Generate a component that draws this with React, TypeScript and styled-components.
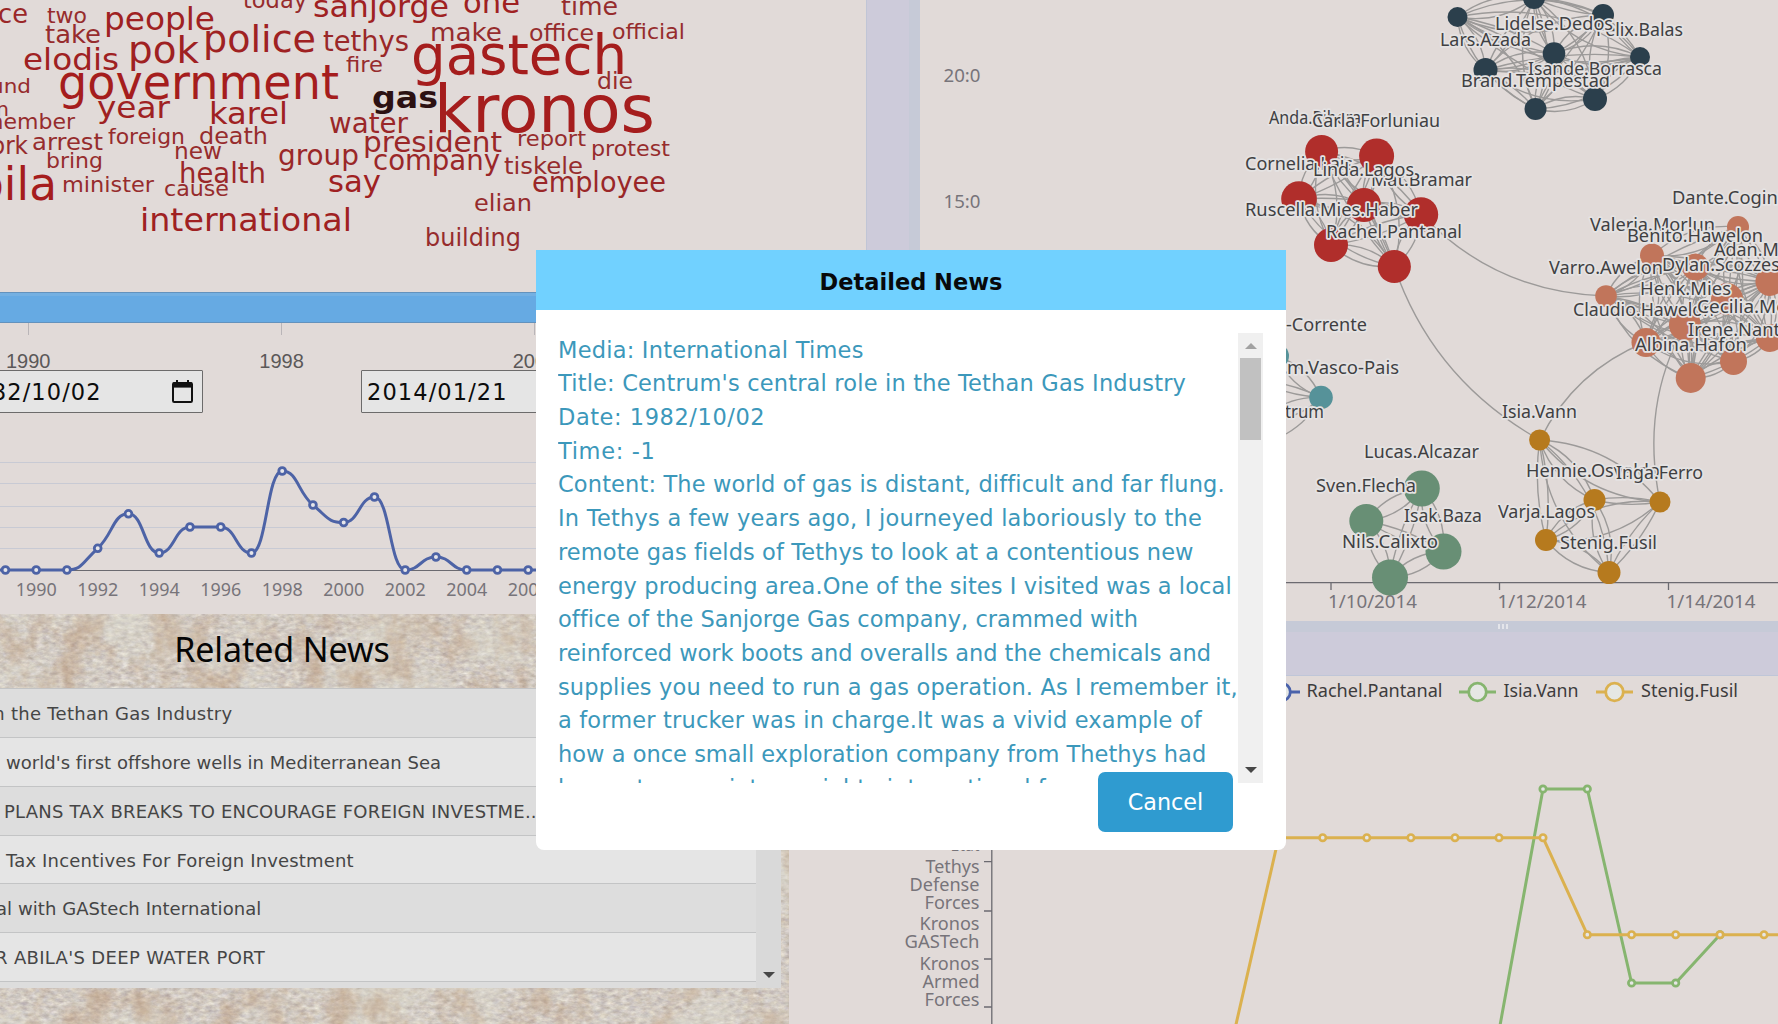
import React from 'react';
import styled, { createGlobalStyle } from 'styled-components';

const UI = "'DejaVu Sans', Verdana, sans-serif";
const CHART = "'Noto Sans', 'Open Sans', sans-serif";

const GlobalStyle = createGlobalStyle`
  *, *::before, *::after { box-sizing: border-box; }
  body { margin: 0; overflow: hidden; font-family: ${UI}; background: #e1dad8; }
`;

const Page = styled.main`
  position: relative;
  display: grid;
  grid-template-columns: 789px 77px 54px 858px;
  grid-template-rows: 614px 62px 348px;
  width: 1778px;
  height: 1024px;
  overflow: hidden;
  background: #e1dad8;
`;

const OverviewPanel = styled.section`
  grid-column: 1 / 3;
  grid-row: 1;
  display: flex;
  flex-direction: column;
  background: #e1dad8;
`;

const Drawing = styled.svg`
  display: block;
  flex: none;
  overflow: hidden;
`;

const SliderTrack = styled.div`
  height: 31px;
  background: #66aae3;
  border-top: 1px solid #6392bd;
  border-bottom: 1px solid #6392bd;
  box-shadow: inset 0 3px 0 #74b0e2;
`;

const SliderScale = styled.div`
  display: flex;
  height: 47px;
  margin-left: -98.5px;
`;

const ScaleMark = styled.div`
  width: 253.4px;
  flex: none;
  display: flex;
  flex-direction: column;
  align-items: center;
  font: 20px/20px 'Liberation Sans', Arial, sans-serif;
  color: #5b5858;
  &::before {
    content: '';
    flex: none;
    width: 1px;
    height: 12px;
    margin-bottom: 16px;
    background: #b9b5b8;
  }
`;

const DateRow = styled.div`
  display: flex;
  gap: 158px;
  height: 43px;
  margin-left: -45px;
`;

const DateField = styled.div`
  display: flex;
  align-items: center;
  justify-content: space-between;
  flex: none;
  width: 248px;
  height: 43px;
  padding: 0 9px 0 5px;
  border: 1px solid #6c6b6b;
  border-radius: 1px;
  background: #e5e5e5;
  color: #0c0c0c;
  font-size: 22.5px;
  letter-spacing: 1.1px;
`;

const NewsPanel = styled.section`
  grid-column: 1;
  grid-row: 2 / 4;
  display: grid;
  grid-template: 410px / 789px;
  overflow: hidden;
`;

const Paper = styled.svg`
  grid-area: 1 / 1;
`;

const NewsBody = styled.div`
  grid-area: 1 / 1;
  z-index: 1;
  display: flex;
  flex-direction: column;
`;

const NewsTitle = styled.h2`
  width: 564px;
  height: 74px;
  margin: 0;
  padding-top: 11px;
  text-align: center;
  font: 400 34px/48px ${CHART};
  letter-spacing: -0.1px;
  color: #060606;
`;

const NewsScroller = styled.div`
  display: flex;
  width: 781px;
  height: 300px;
  overflow: hidden;
`;

const NewsList = styled.ul`
  flex: 1;
  margin: 0;
  padding: 0;
  list-style: none;
`;

const NewsItem = styled.li<{ $indent: number; $spacing: number }>`
  height: 48.85px;
  padding-left: 10px;
  border-top: 1px solid #c3c4c5;
  text-indent: ${(p) => p.$indent - 10}px;
  white-space: nowrap;
  font-size: 18px;
  line-height: 49px;
  letter-spacing: ${(p) => p.$spacing}px;
  color: #454545;
  background: #e5e5e5;
  &:nth-child(odd) { background: #dddddd; }
`;

const ScrollRail = styled.div<{ $tone: string }>`
  display: flex;
  flex-direction: column;
  align-items: center;
  justify-content: space-between;
  flex: none;
  width: 25px;
  padding: 10px 0;
  background: ${(p) => p.$tone};
`;

const Arrow = styled.span<{ $up?: boolean }>`
  width: 0;
  height: 0;
  border-left: 6px solid transparent;
  border-right: 6px solid transparent;
  ${(p) => (p.$up ? 'border-bottom: 6px solid #a2a2a2;' : 'border-top: 6px solid #474747;')}
`;

const Thumb = styled.span`
  width: 21px;
  height: 82px;
  margin: 9px 0 auto;
  background: #c1c1c1;
`;

const VerticalZoomBar = styled.div`
  grid-column: 3;
  grid-row: 1 / 3;
  background: #cdcbda;
  border-left: 1px solid #c0c5d6;
  border-right: 11px solid #c6cad7;
`;

const NetworkPanel = styled.section`
  grid-column: 4;
  grid-row: 1 / 3;
  display: flex;
  flex-direction: column;
`;

const HorizontalZoomBar = styled.div`
  display: flex;
  justify-content: center;
  gap: 2px;
  height: 55px;
  padding: 3px 96px 0 404px;
  background: #cdcbda;
  border-top: 11px solid #c6cad7;
  border-bottom: 1px solid #bfc6d8;
`;

const Grip = styled.i`
  width: 2px;
  height: 5px;
  margin-top: -11px;
  background: #e4e5ea;
`;

const SeriesPanel = styled.section`
  grid-column: 2 / 5;
  grid-row: 3;
`;

const Dialog = styled.div`
  position: absolute;
  left: 536px;
  top: 250px;
  z-index: 10;
  display: flex;
  flex-direction: column;
  width: 750px;
  height: 600px;
  border-radius: 0 0 8px 8px;
  background: #fff;
`;

const DialogHeader = styled.header`
  height: 60px;
  text-align: center;
  font-size: 22.5px;
  font-weight: 700;
  line-height: 64px;
  color: #08090b;
  background: #71d1ff;
`;

const DialogContent = styled.div`
  display: flex;
  width: 705px;
  height: 450px;
  margin: 23px 0 0 22px;
  overflow: hidden;
`;

const Article = styled.div`
  flex: 1;
  min-width: 0;
  padding-top: 0.5px;
  font-size: 22.5px;
  line-height: 33.72px;
  color: #3c98bb;
  white-space: nowrap;
`;

const Line = styled.div<{ $spacing: number }>`
  letter-spacing: ${(p) => p.$spacing}px;
`;

const CancelButton = styled.button`
  align-self: flex-end;
  width: 135px;
  height: 60px;
  margin: -11px 53px 0 0;
  padding: 0;
  border: 0;
  border-radius: 7px;
  font: 22.3px/61px ${UI};
  color: #fff;
  background: #2f9bd0;
`;

type Word = [text: string, x0: number, x1: number, baseline: number, size: number];

const WORDS: Word[] = [
  ['today', 243, 307, 8, 23], ['sanjorge', 313, 449, 16.5, 31], ['one', 463, 520, 12.5, 31],
  ['time', 561, 618, 14.5, 25], ['ce', -2, 28, 22.5, 27], ['two', 47, 87, 22.5, 22],
  ['take', 45, 101, 42.5, 25.5], ['people', 104, 215, 29.5, 32], ['police', 203, 316, 51.5, 38],
  ['pok', 128, 199, 62.5, 38], ['tethys', 323, 409, 51, 28], ['elodis', 23, 119, 70, 31],
  ['fire', 346, 383, 71.5, 21], ['government', 58, 339, 98.5, 48], ['und', -10, 31, 92.5, 20],
  ['n', -4, 9, 116, 20], ['year', 97, 170, 118, 31], ['karel', 209, 288, 123.5, 31],
  ['water', 329, 408, 132.5, 28], ['member', -18, 75, 129, 21], ['ork', -9, 28, 153.5, 25],
  ['arrest', 32, 103, 149.5, 23], ['foreign', 108, 185, 143.5, 21], ['death', 199, 268, 143.5, 23],
  ['new', 174, 222, 158.5, 23], ['president', 363, 502, 151.5, 28.5], ['report', 517, 586, 145.5, 21],
  ['protest', 591, 670, 155.5, 21], ['bring', 46, 103, 168, 21], ['health', 179, 266, 182.5, 28],
  ['group', 278, 359, 164.5, 28], ['company', 373, 500, 169.5, 28], ['tiskele', 504, 583, 173.5, 23],
  ['say', 328, 381, 191.5, 31], ['employee', 532, 666, 191.5, 28], ['minister', 62, 154, 191.5, 20.5],
  ['cause', 164, 229, 195.5, 21], ['bila', -25, 57, 200, 46], ['international', 140, 352, 230.5, 32],
  ['elian', 474, 532, 210.5, 23], ['building', 425, 521, 245.5, 24.5], ['make', 430, 502, 40.5, 25],
  ['office', 529, 594, 40.5, 23.5], ['official', 612, 685, 39, 21.5], ['gastech', 411, 627, 74, 55],
  ['kronos', 434, 655, 132, 66], ['die', 597, 633, 88.5, 22.5],
];

const wordColor = (size: number) => (size > 42 ? '#a51d1d' : size > 30 ? '#9f2122' : size > 26 ? '#9a2728' : '#962c2d');

const WordCloud = () => (
  <Drawing width={866} height={292} fontFamily={UI}>
    {WORDS.map(([text, x0, x1, y, size]) => (
      <text key={text} x={x0} y={y} fontSize={size} fill={wordColor(size)} textLength={x1 - x0} lengthAdjust="spacingAndGlyphs">
        {text}
      </text>
    ))}
    <text x={372} y={107.5} fontSize={31} fontWeight={700} fill="#2c1112" textLength={66} lengthAdjust="spacingAndGlyphs">
      gas
    </text>
  </Drawing>
);

const CalendarIcon = () => (
  <svg width={21} height={23} viewBox="0 0 21 23">
    <path d="M5 0v4M16 0v4" stroke="#111" strokeWidth="2" />
    <rect x="1" y="3" width="19" height="19" rx="1.2" fill="none" stroke="#111" strokeWidth="2" />
    <rect x="1" y="2.4" width="19" height="5.2" fill="#111" />
  </svg>
);

const STEP = 30.75;
const COUNTS: [number, number][] = [
  [1988, 570], [1989, 570], [1990, 570], [1991, 570], [1992, 548.3], [1993, 513.8], [1994, 553], [1995, 527],
  [1996, 527], [1997, 553], [1998, 471], [1999, 505], [2000, 522.5], [2001, 497], [2002, 570], [2003, 557],
  [2004, 570], [2005, 570], [2006, 570], [2007, 570],
];
const yearX = (year: number) => 36.2 + (year - 1990) * STEP;

/* Cubic path whose tangents flatten out at every local extremum. */
const smoothPath = (points: [number, number][]) => {
  const slope = points.map((p, i) => {
    if (i === 0 || i === points.length - 1) return 0;
    const a = p[1] - points[i - 1][1];
    const b = points[i + 1][1] - p[1];
    return a * b <= 0 ? 0 : (a + b) / 2;
  });
  return points
    .map(([x, y], i) => {
      if (i === 0) return `M${x} ${y}`;
      const [px, py] = points[i - 1];
      const c = STEP * 0.5;
      return `C${px + c} ${py + slope[i - 1] * 0.5} ${x - c} ${y - slope[i] * 0.5} ${x} ${y}`;
    })
    .join('');
};

const YearChart = () => (
  <Drawing width={866} height={201} viewBox="0 413 866 201" fontFamily={CHART}>
    {[462.5, 483.5, 506.5, 527.5, 548.5].map((y) => (
      <line key={y} x1={0} x2={866} y1={y} y2={y} stroke="#c8cad4" />
    ))}
    <line x1={0} x2={866} y1={570.5} y2={570.5} stroke="#6b6a70" />
    <path d={smoothPath(COUNTS.map(([year, y]) => [yearX(year), y]))} fill="none" stroke="#4d63a6" strokeWidth={3} />
    {COUNTS.map(([year, y]) => (
      <circle key={year} cx={yearX(year)} cy={y} r={3.4} fill="#e6e6ea" stroke="#4d63a6" strokeWidth={2.8} />
    ))}
    {[1990, 1992, 1994, 1996, 1998, 2000, 2002, 2004, 2006].map((year) => (
      <text key={year} x={yearX(year) - 20.5} y={595.5} fontSize={18.4} fill="#77747a" textLength={41} lengthAdjust="spacingAndGlyphs">
        {year}
      </text>
    ))}
  </Drawing>
);

const NEWS = [
  { title: 'in the Tethan Gas Industry', indent: -12, spacing: 0.28 },
  { title: "world's first offshore wells in Mediterranean Sea", indent: 6, spacing: 0.03 },
  { title: 'PLANS TAX BREAKS TO ENCOURAGE FOREIGN INVESTME...', indent: 4, spacing: 0.22 },
  { title: 'Tax Incentives For Foreign Investment', indent: 6, spacing: 0.17 },
  { title: 'al with GAStech International', indent: -4, spacing: 0.07 },
  { title: "R ABILA'S DEEP WATER PORT", indent: -5, spacing: 0.33 },
  { title: '', indent: 0, spacing: 0 },
];

const PaperTexture = () => (
  <Paper width={789} height={410}>
    <defs>
      <filter id="weave" x="0" y="0" width="100%" height="100%" colorInterpolationFilters="sRGB">
        <feTurbulence type="fractalNoise" baseFrequency="0.14 0.26" numOctaves={3} seed={7} result="grain" />
        <feColorMatrix in="grain" type="matrix" values="0.26 0.12 0 0 0.63  0.26 0.16 0 0 0.58  0.22 0.18 0.08 0 0.52  0 0 0 0 1" />
      </filter>
      <filter id="stain" x="0" y="0" width="100%" height="100%" colorInterpolationFilters="sRGB">
        <feTurbulence type="fractalNoise" baseFrequency="0.034 0.024" numOctaves={5} seed={12} />
        <feColorMatrix type="matrix" values="0 0 0 0 0.7  0 0 0 0 0.53  0 0 0 0 0.38  2.6 0.6 0 0 -1.45" />
      </filter>
      <filter id="bleach" x="0" y="0" width="100%" height="100%" colorInterpolationFilters="sRGB">
        <feTurbulence type="fractalNoise" baseFrequency="0.012 0.02" numOctaves={4} seed={4} />
        <feColorMatrix type="matrix" values="0 0 0 0 0.88  0 0 0 0 0.88  0 0 0 0 0.83  0 3 0 0 -1.2" />
      </filter>
    </defs>
    <rect width="789" height="410" filter="url(#weave)" />
    <rect width="789" height="410" filter="url(#bleach)" opacity="0.42" />
    <rect width="789" height="410" filter="url(#stain)" opacity="0.4" />
  </Paper>
);

type GraphNode = [x: number, y: number, r: number];
type Label = [text: string, x: number, baseline: number, width: number];

const CLUSTERS: { color: string; nodes: GraphNode[] }[] = [
  { color: '#2b3f4c', nodes: [[1457.5, 17, 10], [1534, -2, 11], [1603, 15, 11], [1554, 53.5, 11.3], [1640, 57, 10], [1485.5, 70, 12], [1595, 99, 12], [1535.5, 109, 11]] },
  { color: '#b02e2b', nodes: [[1321.6, 151.5, 16.5], [1376.6, 156, 17.5], [1299, 199, 17.8], [1364, 205, 17], [1421, 214.5, 17.2], [1331, 245, 17], [1394.3, 266.5, 16.6]] },
  { color: '#c1755b', nodes: [[1738, 227, 11], [1652, 255.5, 12], [1695.5, 267, 13.5], [1606, 296, 10.8], [1727, 299, 16], [1770, 281.5, 14.5], [1685, 325, 16], [1646, 342.5, 14.5], [1770, 338, 14], [1733.5, 361.5, 13.5], [1690.7, 378, 15]] },
  { color: '#688f75', nodes: [[1421.8, 488.5, 18], [1366.3, 521, 17], [1443.5, 551.5, 18], [1390, 577.5, 18]] },
  { color: '#b67a1e', nodes: [[1539.6, 440, 10.5], [1594.5, 500, 11], [1660, 502, 10.5], [1546, 540, 11], [1609, 572.5, 11.5]] },
  { color: '#569299', nodes: [[1277, 356, 12], [1321, 397.5, 11.8], [1255, 380, 12], [1262, 420, 12]] },
];

const LABELS: Label[] = [
  ['Felix.Balas', 1596, 36, 87], ['Lars.Azada', 1440, 45.5, 91], ['Lidelse.Dedos', 1495, 30, 118],
  ['Brand.Tempestad', 1461, 87, 149], ['Isande.Borrasca', 1528, 75, 134],
  ['Anda.Ribera', 1269, 124, 92], ['Carla.Forluniau', 1312, 127, 128], ['Cornelia.Lais', 1245, 170, 108],
  ['Mat.Bramar', 1371, 186, 101], ['Linda.Lagos', 1313, 176, 101], ['Ruscella.Mies.Haber', 1245, 216, 173],
  ['Rachel.Pantanal', 1326, 238, 136],
  ['Dante.Coginian', 1672, 204, 132], ['Valeria.Morlun', 1590, 231, 125], ['Benito.Hawelon', 1627, 242, 136],
  ['Adan.Morlun', 1714, 256, 110], ['Varro.Awelon', 1549, 274, 114], ['Dylan.Scozzese', 1662, 270.5, 128],
  ['Henk.Mies', 1640, 295, 91], ['Claudio.Hawelon', 1573, 316, 141], ['Cecilia.Morluniau', 1697, 313, 154],
  ['Irene.Nant', 1688, 335.5, 92], ['Albina.Hafon', 1635, 351, 112],
  ['-Corrente', 1286, 331, 81], ['m.Vasco-Pais', 1287, 374, 112], ['trum', 1285, 418, 39],
  ['Lucas.Alcazar', 1364, 457.5, 115], ['Sven.Flecha', 1316, 492, 100], ['Isak.Baza', 1404, 522, 78],
  ['Nils.Calixto', 1342, 548, 96], ['Isia.Vann', 1502, 418, 75], ['Hennie.Osvaldo', 1526, 477, 134],
  ['Inga.Ferro', 1616, 479, 87], ['Varja.Lagos', 1498, 518, 97], ['Stenig.Fusil', 1560, 549, 97],
];

const arc = (a: GraphNode, b: GraphNode, bend: number) => {
  const cx = (a[0] + b[0]) / 2 - (a[1] - b[1]) * bend;
  const cy = (a[1] + b[1]) / 2 - (b[0] - a[0]) * bend;
  return `M${a[0]} ${a[1]}Q${cx} ${cy} ${b[0]} ${b[1]}`;
};

const DATES: [string, number][] = [['1/10/2014', 1328], ['1/12/2014', 1497.5], ['1/14/2014', 1666.5]];

const NetworkChart = () => (
  <Drawing width={858} height={621} viewBox="920 0 858 621" fontFamily={CHART} fontSize={18}>
    <g fill="#77747a">
      <text x={943.5} y={81.5} textLength={37} lengthAdjust="spacingAndGlyphs">20:0</text>
      <text x={943.5} y={207.5} textLength={37} lengthAdjust="spacingAndGlyphs">15:0</text>
      {DATES.map(([t, x]) => (
        <text key={t} x={x} y={607.5} textLength={89} lengthAdjust="spacingAndGlyphs">{t}</text>
      ))}
    </g>
    <path d="M920 582.7H1778M1331 583v7M1499.5 583v7M1668.5 583v7" stroke="#6b6a70" strokeWidth={1.3} fill="none" />
    <g fill="none" stroke="#9c9a99" strokeWidth={1.4}>
      {CLUSTERS.map((c) =>
        c.nodes.flatMap((a, i) =>
          c.nodes.map((b, j) =>
            i === j ? null : <path key={`${i}-${j}`} d={arc(a, b, (i + j) % 3 === 0 ? 0.1 : 0.22)} />,
          ),
        ),
      )}
      <path d="M1421 214Q1496 293 1606 296" />
      <path d="M1394 266Q1433 380 1540 440" />
      <path d="M1540 440Q1574 371 1646 342" />
      <path d="M1660 502Q1640 405 1685 325" />
      <path d="M1321 397Q1310 420 1286 434" />
    </g>
    {CLUSTERS.map((c) => (
      <g key={c.color} fill={c.color}>
        {c.nodes.map(([x, y, r]) => (
          <circle key={`${x}-${y}`} cx={x} cy={y} r={r} />
        ))}
      </g>
    ))}
    <g fill="#3f4042" stroke="#e5e3e3" strokeWidth={3.4} strokeLinejoin="round" paintOrder="stroke">
      {LABELS.map(([t, x, y, w]) => (
        <text key={t} x={x} y={y} textLength={w} lengthAdjust="spacingAndGlyphs">{t}</text>
      ))}
    </g>
  </Drawing>
);

const LEGEND = [
  { name: 'Rachel.Pantanal', color: '#4a62ab', cx: 1281.5, x: 1306.5, width: 136 },
  { name: 'Isia.Vann', color: '#86b56f', cx: 1477.5, x: 1503.5, width: 75 },
  { name: 'Stenig.Fusil', color: '#dbb14f', cx: 1614.5, x: 1641, width: 97 },
];

const GREEN: [number, number][] = [[1499, 1031], [1543, 789], [1587.3, 789], [1631.6, 983], [1675.7, 983], [1720, 934.7]];
const YELLOW: [number, number][] = [
  [1234.5, 1031], [1278.6, 837.7], [1322.7, 837.7], [1366.8, 837.7], [1410.9, 837.7], [1455, 837.7], [1499, 837.7],
  [1543, 837.7], [1587.3, 934.7], [1631.6, 934.7], [1675.7, 934.7], [1720, 934.7], [1764, 934.7], [1808, 934.7],
];
const AXIS_LABELS: [string, number, number][] = [
  ['Etat', 851, 29], ['Tethys', 872.5, 54], ['Defense', 890.5, 70], ['Forces', 908.5, 55], ['Kronos', 929.5, 60],
  ['GASTech', 947.5, 75], ['Kronos', 969.5, 60], ['Armed', 987.5, 57], ['Forces', 1005.5, 55],
];

const Series = ({ points, color }: { points: [number, number][]; color: string }) => (
  <g stroke={color}>
    <polyline points={points.map((p) => p.join()).join(' ')} fill="none" strokeWidth={3} strokeLinejoin="bevel" />
    {points.map(([x, y]) => (
      <circle key={x} cx={x} cy={y} r={3.2} fill="#e6e6e6" strokeWidth={2.7} />
    ))}
  </g>
);

const SeriesChart = () => (
  <Drawing width={989} height={348} viewBox="789 676 989 348" fontFamily={CHART} fontSize={18}>
    {LEGEND.map((l) => (
      <g key={l.name}>
        <line x1={l.cx - 18.5} x2={l.cx + 18.5} y1={692} y2={692} stroke={l.color} strokeWidth={3} />
        <circle cx={l.cx} cy={692} r={8.8} fill="#e5e7e4" stroke={l.color} strokeWidth={2.8} />
        <text x={l.x} y={696.5} fill="#3d3c3d" textLength={l.width} lengthAdjust="spacingAndGlyphs">{l.name}</text>
      </g>
    ))}
    <path d="M991.8 676V1024M984 861.7h8M984 911h8M984 959h8M984 1007h8" stroke="#6b6a70" strokeWidth={1.3} fill="none" />
    <g fill="#77747a">
      {AXIS_LABELS.map(([t, y, w]) => (
        <text key={y} x={979.5 - w} y={y} textLength={w} lengthAdjust="spacingAndGlyphs">{t}</text>
      ))}
    </g>
    <Series points={GREEN} color="#86b56f" />
    <Series points={YELLOW} color="#dbb14f" />
  </Drawing>
);

const ARTICLE: [string, number][] = [
  ['Media: International Times', 0.22],
  ["Title: Centrum's central role in the Tethan Gas Industry", 0.18],
  ['Date: 1982/10/02', 0.56],
  ['Time: -1', 0.65],
  ['Content: The world of gas is distant, difficult and far flung.', 0.13],
  ['In Tethys a few years ago, I journeyed laboriously to the', 0.23],
  ['remote gas fields of Tethys to look at a contentious new', 0.09],
  ['energy producing area.One of the sites I visited was a local', 0.1],
  ['office of the Sanjorge Gas company, crammed with', 0.02],
  ['reinforced work boots and overalls and the chemicals and', 0],
  ['supplies you need to run a gas operation. As I remember it,', 0.14],
  ['a former trucker was in charge.It was a vivid example of', 0.16],
  ['how a once small exploration company from Thethys had', 0.02],
  ['begun to grow into a mighty international f', 0.05],
];

export default function App() {
  return (
    <>
      <GlobalStyle />
      <Page>
        <OverviewPanel>
          <WordCloud />
          <SliderTrack />
          <SliderScale>
            <ScaleMark>1990</ScaleMark>
            <ScaleMark>1998</ScaleMark>
            <ScaleMark>2006</ScaleMark>
          </SliderScale>
          <DateRow>
            <DateField>1982/10/02 <CalendarIcon /></DateField>
            <DateField>2014/01/21</DateField>
          </DateRow>
          <YearChart />
        </OverviewPanel>

        <NewsPanel>
          <PaperTexture />
          <NewsBody>
            <NewsTitle>Related News</NewsTitle>
            <NewsScroller>
              <NewsList>
                {NEWS.map((n) => (
                  <NewsItem key={n.title} $indent={n.indent} $spacing={n.spacing}>{n.title}</NewsItem>
                ))}
              </NewsList>
              <ScrollRail $tone="#d9d9d9">
                <Arrow $up />
                <Arrow />
              </ScrollRail>
            </NewsScroller>
          </NewsBody>
        </NewsPanel>

        <VerticalZoomBar />

        <NetworkPanel>
          <NetworkChart />
          <HorizontalZoomBar>
            <Grip /><Grip /><Grip />
          </HorizontalZoomBar>
        </NetworkPanel>

        <SeriesPanel>
          <SeriesChart />
        </SeriesPanel>

        <Dialog role="dialog">
          <DialogHeader>Detailed News</DialogHeader>
          <DialogContent>
            <Article>
              {ARTICLE.map(([text, spacing]) => (
                <Line key={text} $spacing={spacing}>{text}</Line>
              ))}
            </Article>
            <ScrollRail $tone="#f0f0f0">
              <Arrow $up />
              <Thumb />
              <Arrow />
            </ScrollRail>
          </DialogContent>
          <CancelButton>Cancel</CancelButton>
        </Dialog>
      </Page>
    </>
  );
}
